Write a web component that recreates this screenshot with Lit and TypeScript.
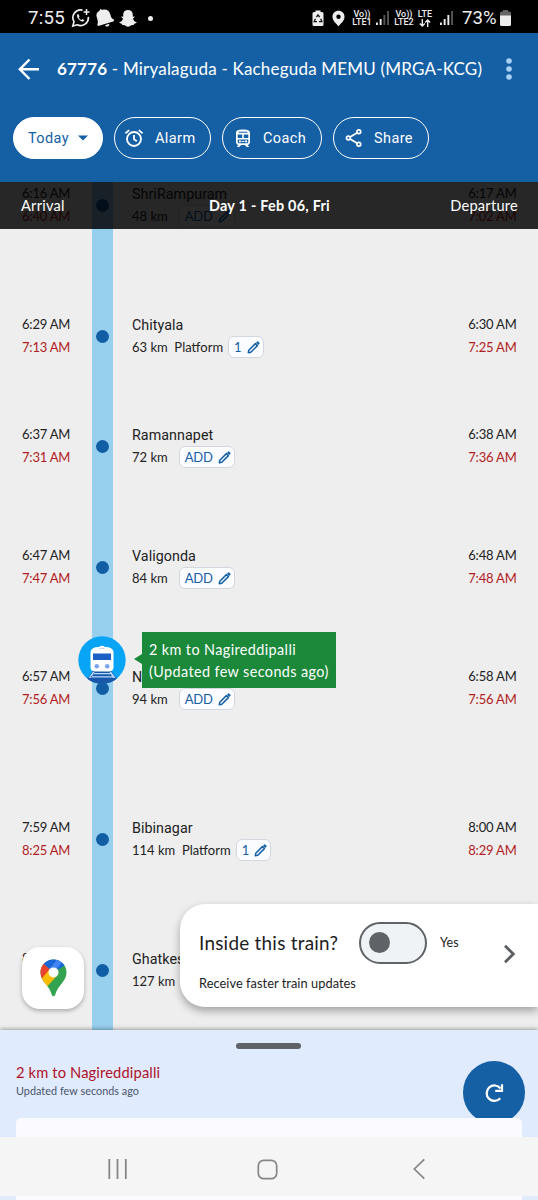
import { LitElement, html, css, svg, nothing } from "lit";
import { customElement, property } from "lit/decorators.js";

interface Stop {
  name: string;
  km: string;
  platform?: string;
  arr: string;
  arrLive: string;
  dep: string;
  depLive: string;
  height: number;
  train?: boolean;
}

const STOPS: Stop[] = [
  { name: "ShriRampuram", km: "48 km", arr: "6:16 AM", arrLive: "6:40 AM", dep: "6:17 AM", depLive: "7:02 AM", height: 131 },
  { name: "Chityala", km: "63 km", platform: "1", arr: "6:29 AM", arrLive: "7:13 AM", dep: "6:30 AM", depLive: "7:25 AM", height: 110 },
  { name: "Ramannapet", km: "72 km", arr: "6:37 AM", arrLive: "7:31 AM", dep: "6:38 AM", depLive: "7:36 AM", height: 121 },
  { name: "Valigonda", km: "84 km", arr: "6:47 AM", arrLive: "7:47 AM", dep: "6:48 AM", depLive: "7:48 AM", height: 121 },
  { name: "Nagireddipalli", km: "94 km", arr: "6:57 AM", arrLive: "7:56 AM", dep: "6:58 AM", depLive: "7:56 AM", height: 151, train: true },
  { name: "Bibinagar", km: "114 km", platform: "1", arr: "7:59 AM", arrLive: "8:25 AM", dep: "8:00 AM", depLive: "8:29 AM", height: 131 },
  { name: "Ghatkesar", km: "127 km", arr: "8:14 AM", arrLive: "8:39 AM", dep: "8:15 AM", depLive: "8:40 AM", height: 83 },
];

const pencil = svg`<svg width="13" height="13" viewBox="0 0 13 13">
  <path d="M1.300 11.700l.5-2.500 6.600-6.600 2 2-6.600 6.600z" fill="none" stroke="#1560a5" stroke-width="1.500" stroke-linejoin="round"/>
  <path d="M9.200 1.800l1-1c.3-.3.7-.3 1 0l1 1c.3.3.3.7 0 1l-1 1z" fill="#1560a5" stroke="#1560a5" stroke-width=".4"/></svg>`;

const alarm = svg`<svg width="20" height="20" viewBox="0 0 20 20" fill="none" stroke="#fff" stroke-width="1.800">
  <circle cx="10" cy="11" r="7"/><path d="M10 7v4.300l2.800 1.900M1.400 5.400l3.800-3.300M18.600 5.400l-3.800-3.300"/></svg>`;

const coach = svg`<svg width="18" height="20" viewBox="0 0 18 20">
  <path fill="#fff" fill-rule="evenodd" d="M9 1.400c-4 0-7 .5-7 3.600v9c0 1.600 1.100 2.800 2.600 3L3 18.600v.4h2.200l2-2h3.600l2 2H15v-.4L13.400 17c1.500-.2 2.600-1.400 2.600-3V5c0-3.100-3-3.600-7-3.600zM4.600 3.800h8.800v1H4.600zM3.700 6.600h4.500v3.300H3.700zm6.100 0h4.500v3.300H9.800zM3.700 11.600h10.600v2.200c0 .9-.6 1.500-1.500 1.500H5.200c-.9 0-1.500-.6-1.500-1.500z"/>
  <circle cx="5.900" cy="13.400" r="1.100" fill="#fff"/><circle cx="12.100" cy="13.400" r="1.100" fill="#fff"/><path d="M7.500 13.400h3" stroke="#fff"/></svg>`;

const share = svg`<svg width="18" height="20" viewBox="0 0 18 20" fill="none" stroke="#fff" stroke-width="1.700">
  <circle cx="3.400" cy="10" r="1.900"/><circle cx="13.800" cy="3.800" r="1.900"/><circle cx="13.800" cy="16.200" r="1.900"/><path d="M5.100 9l7.100-4.200M5.100 11l7.100 4.200"/></svg>`;

const signal = (lit: number) => svg`<svg width="16" height="16" viewBox="0 0 16 16">
  ${[0, 1, 2, 3].map((i) => svg`<rect x=${1 + i * 3.7} y=${[12.5, 9, 5, 1][i]} width="1.900" height=${[2.5, 6, 10, 14][i]} fill=${i < lit ? "#eee" : "#555"} />`)}</svg>`;

@customElement("status-bar")
export class StatusBar extends LitElement {
  static styles = css`
    :host { display: flex; height: 33px; background: #000; color: #eee; font-family: Roboto, sans-serif; align-items: center; padding: 0 27px 0 28px; box-sizing: border-box; }
    .side { display: flex; align-items: center; margin-top: 3px; }
    .clock { font-size: 18.600px; width: 42.500px; letter-spacing: 0.250px; }
    .grow { flex: 1; }
    .net { font-size: 9px; line-height: 8.500px; width: 20px; font-weight: 500; text-align: center; white-space: nowrap; }
    .pct { font-size: 18.600px; width: 36px; }
    svg { display: block; }
    .ring { margin-right: 4px; }
    .dot { width: 5px; height: 5px; border-radius: 50%; background: #eee; margin-left: 11px; }
    .pin { margin: 0 7px 0 8px; }
    .sig1 { margin: 0 3px 0 3px; }
    .sig2 { margin: 0 7px 0 6px; }
    .net.lte { margin-left: 3px; width: 16px; margin-top: 1px; }
    .battery { margin-left: 2px; }
    .arrows { height: 8px; display: block; margin: 1px auto 0; }
  `;
  render() {
    return html`
      <div class="side">
        <span class="clock">7:55</span>
        <svg class="ring" width="20" height="20" viewBox="0 0 20 20" fill="none" stroke="#eee" stroke-width="1.700">
          <path d="M11.500 2.100A7.800 7.800 0 0 0 3 13.600L1.800 18l4.300-1.200A7.800 7.800 0 0 0 17.300 8.800"/>
          <path d="M15.500 1v6M12.500 4h6" stroke-width="1.500"/>
          <path d="M7 5.700c-1.800 1.500-.8 4 .9 5.800s4.300 3 5.600 1.100l-2-1.500-1.200.9c-1.300-.6-2-1.400-2.500-2.500l.8-1.200z" fill="#eee" stroke="none"/>
        </svg>
        <svg class="ring" width="20" height="20" viewBox="0 0 20 20" fill="#eee">
          <path d="M5.500.7L7 2c4-1.300 7.500.8 8.400 4.500.7 3 1.200 4 3.500 5.100v1.600L3.200 18l-.9-1.200c1-2.400.6-4-.4-7C.7 6.500 1.800 4 4.500 2.700z"/><path d="M10 17.200l4.300-1.500c.5 2.800-3.300 4-4.300 1.500z"/>
        </svg>
        <svg width="18" height="19" viewBox="0 0 18 19" fill="#eee">
          <path d="M9 1c3 0 4.800 2 4.800 4.800v2l1.500-.2c.9.400.3 1.200-1.300 1.800.4 2 1.700 3.200 3.500 3.700.4 1-.8 1.400-2.300 1.700l-.5 1.200c-1.700-.2-2.700.1-3.500 1-1.500 1-3 1-4.400 0-.8-.9-1.800-1.200-3.500-1l-.5-1.200C1.300 14.500.1 14.100.5 13.100 2.300 12.600 3.600 11.400 4 9.400 2.400 8.800 1.800 8 2.700 7.600l1.500.2v-2C4.200 3 6 1 9 1z"/>
        </svg>
        <span class="dot"></span>
      </div>
      <span class="grow"></span>
      <div class="side">
        <svg width="12" height="17" viewBox="0 0 12 17"><path d="M3.500 2V.5h5V2H10q1.500 0 1.500 1.500v11Q11.500 16 10 16H2Q.5 16 .5 14.500v-11Q.5 2 2 2z" fill="#eee"/><path d="M4.400 7.200L6 4.800l1.700 2.400M8.700 8.800l1.200 2.800H7M5 11.600H2.200l1.200-2.800" fill="none" stroke="#111" stroke-width="1.300"/></svg>
        <svg class="pin" width="13" height="17" viewBox="0 0 13 17"><path fill="#eee" fill-rule="evenodd" d="M6.500.8C3 .8.5 3.400.5 6.700c0 4 3.500 6.500 6 9.600 2.500-3.100 6-5.600 6-9.600C12.500 3.400 10 .8 6.500.8zm0 3.700a2.200 2.200 0 1 1 0 4.400 2.200 2.200 0 0 1 0-4.400z"/></svg>
        <div class="net">Vo))<br />LTE1</div>
        <span class="sig1">${signal(2)}</span>
        <div class="net">Vo))<br />LTE2</div>
        <div class="net lte">LTE<svg class="arrows" width="12" height="8" viewBox="0 0 12 8" fill="none" stroke="#eee" stroke-width="1.400"><path d="M3.300 0v7M.8 4.500l2.500 2.500 2.500-2.500M8.700 8V1M6.200 3.500L8.700 1l2.500 2.500"/></svg></div>
        <span class="sig2">${signal(3)}</span>
        <span class="pct">73%</span>
        <svg class="battery" width="11" height="16" viewBox="0 0 11 16"><path d="M3 1.500V0h5v1.500h1.500Q11 1.500 11 3v3H0V3q0-1.500 1.500-1.500z" fill="#666"/><path d="M0 5.500h11v9Q11 16 9.500 16h-8Q0 16 0 14.500z" fill="#eee"/></svg>
      </div>`;
  }
}

@customElement("train-header")
export class TrainHeader extends LitElement {
  static styles = css`
    :host { display: block; height: 149px; background: #1560a5; color: #fff; box-sizing: border-box; padding-top: 22px; }
    .bar { display: flex; align-items: center; height: 28px; padding: 0 26px 0 18px; }
    .title { font: 17px/28px Lato, sans-serif; letter-spacing: 0.200px; margin-left: 17px; flex: 1; white-space: nowrap; }
    b { font-weight: 700; }
    svg { display: block; flex: none; }
    .pills { display: flex; gap: 11px; padding: 34px 0 0 13px; }
    .pill { height: 42px; box-sizing: border-box; border: 1.500px solid #fff; border-radius: 21px; display: flex; align-items: center; font: 14.500px Roboto, sans-serif; letter-spacing: 0.400px; }
    .pill svg { margin-right: 11px; }
    .today { width: 90px; background: #fff; color: #1560a5; padding-left: 14px; gap: 9px; letter-spacing: 0.400px; }
    .alarm { width: 97px; padding-left: 9px; }
    .coach { width: 100px; padding-left: 11px; }
    .share { width: 96px; padding-left: 11px; }
  `;
  render() {
    return html`
      <div class="bar">
        <svg width="22" height="22" viewBox="0 0 22 22" fill="none" stroke="#fff" stroke-width="2.400"><path d="M21 11.300H2M11.500 1.500L1.800 11.300l9.700 9.700"/></svg>
        <span class="title"><b>67776</b> - Miryalaguda - Kacheguda MEMU (MRGA-KCG)</span>
        <svg width="6" height="22" viewBox="0 0 6 22" fill="#a9d1f5"><circle cx="3" cy="3" r="2.800"/><circle cx="3" cy="11" r="2.800"/><circle cx="3" cy="19" r="2.800"/></svg>
      </div>
      <div class="pills">
        <div class="pill today">Today<svg width="10" height="6" viewBox="0 0 10 6"><path d="M0 .5h10L5 5.500z" fill="#1560a5"/></svg></div>
        <div class="pill alarm">${alarm}Alarm</div>
        <div class="pill coach">${coach}Coach</div>
        <div class="pill share">${share}Share</div>
      </div>`;
  }
}

@customElement("stop-row")
export class StopRow extends LitElement {
  @property({ attribute: false }) stop!: Stop;
  static styles = css`
    :host { display: grid; grid-template-columns: 92px 20.500px 1fr auto; height: 100%; position: relative; font-family: Lato, sans-serif; font-size: 13px; color: #222; }
    .times { line-height: 23.200px; letter-spacing: -0.200px; white-space: nowrap; }
    .arr { padding-left: 22px; }
    .dep { padding-right: 21.500px; }
    .live { color: #b11c22; }
    .track { background: #97cfef; display: flex; justify-content: center; padding-top: 16.500px; }
    .dot { width: 13px; height: 13px; border-radius: 50%; background: #125ea5; margin-right: 0.500px; }
    .place { padding-left: 19.500px; }
    .name { font: 14.300px/25.500px Roboto, sans-serif; letter-spacing: 0.050px; height: 23px; }
    .info { display: flex; align-items: center; height: 22px; letter-spacing: 0; white-space: pre; line-height: 20px; }
    .edit { display: flex; align-items: center; gap: 5px; height: 22px; box-sizing: border-box; border: 1px solid #d5d7de; border-radius: 6px; background: #fbfcff; color: #1560a5; padding: 0 3px 0 5px; margin-left: 11px; font-size: 13px; letter-spacing: -0.150px; }
    .edit.num { margin-left: 5px; padding-left: 5px; gap: 5px; }
    .edit svg { display: block; }
    .train { position: absolute; left: 78px; top: -29px; }
    .tip { position: absolute; left: 142px; top: -33px; width: 194px; height: 56px; box-sizing: border-box; padding: 7px 0 0 7px; background: #1b883a; color: #fff; font-size: 14.400px; line-height: 21.500px; letter-spacing: 0.400px; white-space: nowrap; }
    .tip::before { content: ""; position: absolute; left: -8px; top: 22px; border: 5px solid transparent; border-right: 8px solid #1b883a; border-left: 0; }
  `;
  render() {
    const s = this.stop;
    return html`
      <div class="times arr"><div>${s.arr}</div><div class="live">${s.arrLive}</div></div>
      <div class="track"><span class="dot"></span></div>
      <div class="place">
        <div class="name">${s.name}</div>
        <div class="info">${s.km}${s.platform ? "  Platform" : ""}<span class="edit ${s.platform ? "num" : ""}">${s.platform ?? "ADD"}${pencil}</span></div>
      </div>
      <div class="times dep"><div>${s.dep}</div><div class="live">${s.depLive}</div></div>
      ${s.train
        ? html`<svg class="train" width="48" height="48" viewBox="0 0 48 48">
              <defs><clipPath id="disc"><circle cx="24" cy="24" r="23.700"/></clipPath></defs>
              <circle cx="24" cy="24" r="23.700" fill="#08a4f5"/>
              <g clip-path="url(#disc)">
                <path d="M15 34.500h18L38 42v6H10v-6z" fill="#1957a8"/>
                <path d="M10 41L5 48h38l-5-7z" fill="#1957a8"/>
                <path d="M15.500 37h17l.8 1.200H14.700zM14.700 36L10.500 42h2.500l3.500-6zM33.300 36l4.200 6H35l-3.500-6zM13 40.200h22l.8 1.200H12.200z" fill="#b8d9fb"/>
              </g>
              <path d="M21 11q3-2.600 6 0 8.500 0 8.500 5.500V31q0 4.500-4.500 4.500H17q-4.500 0-4.500-4.500V16.500Q12.500 11 21 11z" fill="#fff"/>
              <rect x="15" y="17.500" width="18" height="6.500" fill="#1b5fc4"/>
              <circle cx="18.800" cy="30.300" r="2.300" fill="#7ca5eb"/><circle cx="29.200" cy="30.300" r="2.300" fill="#7ca5eb"/>
              <path d="M21.500 12.700q2.500-1.200 5 0" stroke="#c0ccdd" fill="none"/>
            </svg>
            <div class="tip">2 km to Nagireddipalli<br />(Updated few seconds ago)</div>`
        : nothing}`;
  }
}

@customElement("inside-card")
export class InsideCard extends LitElement {
  static styles = css`
    :host { display: flex; align-items: center; box-sizing: border-box; width: 358px; height: 103px; background: #fff; border-radius: 25px 0 0 25px; box-shadow: 0 4px 9px rgba(0, 0, 0, 0.320); font-family: Lato, sans-serif; color: #1c1c1e; padding: 0 22px 0 19px; }
    .main { flex: 1; }
    .line { display: flex; align-items: center; height: 42px; margin-top: 3px; }
    .ask { font-size: 18.900px; letter-spacing: 0.250px; width: 160px; white-space: nowrap; }
    .switch { width: 68px; height: 42px; box-sizing: border-box; border: 2.500px solid #5f6368; border-radius: 21px; background: #f0f3f6; display: flex; align-items: center; padding-left: 8px; }
    .knob { width: 21px; height: 21px; border-radius: 50%; background: #5f6368; }
    .yes { font-size: 12.500px; margin-left: 13px; letter-spacing: 0.100px; }
    .sub { font-size: 12.800px; line-height: 20px; margin-top: 9px; letter-spacing: 0.050px; }
    svg { display: block; margin-bottom: 4px; }
  `;
  render() {
    return html`
      <div class="main">
        <div class="line"><span class="ask">Inside this train?</span><span class="switch"><span class="knob"></span></span><span class="yes">Yes</span></div>
        <div class="sub">Receive faster train updates</div>
      </div>
      <svg width="13" height="20" viewBox="0 0 13 20" fill="none" stroke="#5a5d61" stroke-width="2.800"><path d="M2 1.800L10.300 10 2 18.200"/></svg>`;
  }
}

@customElement("map-button")
export class MapButton extends LitElement {
  static styles = css`
    :host { display: flex; align-items: center; justify-content: center; width: 62px; height: 62px; border-radius: 18px; background: #fff; box-shadow: 0 2px 4px rgba(0, 0, 0, 0.280); }
  `;
  render() {
    return html`<svg width="27" height="38" viewBox="0 0 27 38">
      <defs><clipPath id="pin"><path d="M13.500.5C6.300.5.500 6.200.500 13.300c0 4 1.500 7 4 10.200 3.700 4.700 6 7.500 7.200 12 .5 2.200 3.100 2.200 3.600 0 1.200-4.500 3.500-7.300 7.200-12 2.500-3.200 4-6.200 4-10.200C26.500 6.200 20.700.5 13.500.5z"/></clipPath></defs>
      <g clip-path="url(#pin)">
        <rect width="27" height="38" fill="#34a34f"/>
        <path d="M0 0h27v5L13.500 13.400 3.500 5z" fill="#1a68d8"/>
        <path d="M17.500 0L27 0V9L22 3.500 13.500 13.400 9.500 10z" fill="#4285f4"/>
        <path d="M3.500 4.800L13.500 13.400 3 24-2 18V5z" fill="#e8432f"/>
        <path d="M1 20.500L9.800 10 17 16.700 5.800 29z" fill="#fbbc04"/>
      </g>
      <circle cx="13.500" cy="13.400" r="5" fill="#fff"/></svg>`;
  }
}

@customElement("status-sheet")
export class StatusSheet extends LitElement {
  static styles = css`
    :host { display: flex; flex-direction: column; position: relative; height: 170px; background: #e0ebfe; font-family: Lato, sans-serif; box-shadow: 0 -1px 4px rgba(0, 0, 0, 0.350); }
    .handle { width: 65px; height: 6px; border-radius: 3px; background: #5f6368; margin: 13px 0 0 236px; }
    .top { display: flex; justify-content: space-between; height: 69px; padding: 0 13px 0 16px; }
    .now { font-size: 14.700px; line-height: 20px; color: #b01028; margin-top: 13px; letter-spacing: 0.140px; }
    .ago { font-size: 10.800px; line-height: 17px; color: #48546a; letter-spacing: 0.050px; }
    .refresh { width: 62.500px; height: 63px; flex: none; border-radius: 50%; background: #1560a5; margin-top: 12px; display: flex; align-items: center; justify-content: center; }
    .card { flex: 1; margin: 0 16px; background: #fafaff; border-radius: 5px 5px 0 0; position: relative; }
    .nav { position: absolute; left: 0; right: 0; top: 107px; height: 59px; background: #f5f5f5; display: flex; align-items: center; padding-top: 5px; box-sizing: border-box; }
    .nav svg { display: block; }
    .recents { margin-left: 107px; }
    .home { margin-left: 129px; }
    .back { margin-left: 134px; }
  `;
  render() {
    return html`
      <div class="handle"></div>
      <div class="top">
        <div><div class="now">2 km to Nagireddipalli</div><div class="ago">Updated few seconds ago</div></div>
        <div class="refresh"><svg width="20" height="20" viewBox="0 0 20 20" fill="none" stroke="#fff" stroke-width="2.200"><path d="M16.200 15.200A7.700 7.700 0 1 1 16.500 5.500"/><path d="M18 1.200v6.600h-6.800"/></svg></div>
      </div>
      <div class="card"></div>
      <div class="nav">
        <svg class="recents" width="21" height="20" viewBox="0 0 21 20" stroke="#868686" stroke-width="1.800"><path d="M2.300 0v20M10.500 0v20M18.800 0v20"/></svg>
        <svg class="home" width="21" height="21" viewBox="0 0 21 21" fill="none" stroke="#868686" stroke-width="1.700"><rect x="1.300" y="1.300" width="18.400" height="18.400" rx="5.500"/></svg>
        <svg class="back" width="14" height="22" viewBox="0 0 14 22" fill="none" stroke="#868686" stroke-width="1.700"><path d="M12.300 1.300L2.300 11l10 9.700"/></svg>
      </div>`;
  }
}

@customElement("app-root")
export class AppRoot extends LitElement {
  static styles = css`
    :host { display: block; position: relative; width: 538px; height: 1200px; overflow: hidden; background: #eee; }
    .route { position: relative; height: 848px; }
    .strip { position: absolute; z-index: 2; left: 0; right: 0; top: 0; height: 47px; background: rgba(0, 0, 0, 0.840); color: #fff; display: grid; grid-template-columns: 1fr auto 1fr; align-items: center; padding: 0 20px 0 21px; box-sizing: border-box; font: 14.600px Lato, sans-serif; letter-spacing: 0.250px; }
    .day { font-weight: 700; font-size: 14.400px; }
    .dep { text-align: right; }
    .inside { position: absolute; z-index: 2; right: 0; top: 722px; }
    .map { position: absolute; z-index: 2; left: 22px; top: 765px; }
    .sheet { z-index: 3; }
  `;
  render() {
    return html`
      <status-bar></status-bar>
      <train-header></train-header>
      <div class="route">
        ${STOPS.map((s) => html`<div style="height:${s.height}px"><stop-row .stop=${s}></stop-row></div>`)}
        <div class="strip"><span>Arrival</span><span class="day">Day 1 - Feb 06, Fri</span><span class="dep">Departure</span></div>
        <inside-card class="inside"></inside-card>
        <map-button class="map"></map-button>
      </div>
      <status-sheet class="sheet"></status-sheet>`;
  }
}
